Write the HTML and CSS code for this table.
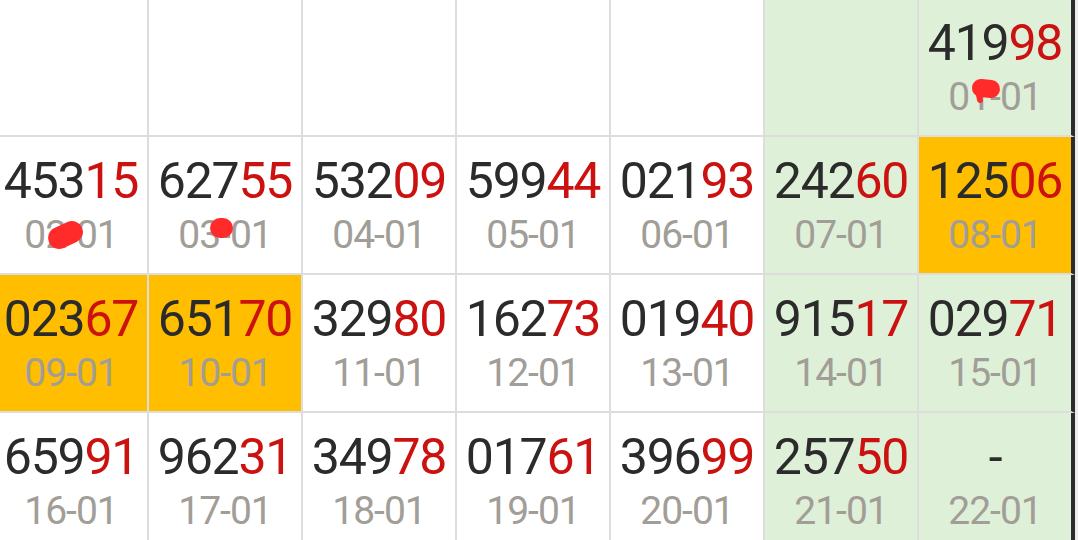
FILE: index.html
```html
<!DOCTYPE html>
<html>
<head>
<meta charset="utf-8">
<link rel="stylesheet" href="styles.css">
</head>
<body>
<div class="page">
  <div class="grid">
    <div class="cell"></div>
    <div class="cell"></div>
    <div class="cell"></div>
    <div class="cell"></div>
    <div class="cell"></div>
    <div class="cell green"></div>
    <div class="cell green last">
      <div class="num">419<span class="hi">98</span></div>
      <div class="date">01-01</div>
      <svg class="mark m3" width="44" height="40" viewBox="0 0 44 40"><path d="M21 18 L31 19" stroke="#ff2a2a" stroke-width="18" stroke-linecap="round" fill="none"/><path d="M19 25 L20 30" stroke="#ff2a2a" stroke-width="6" stroke-linecap="round" fill="none"/></svg>
    </div>

    <div class="cell">
      <div class="num">453<span class="hi">15</span></div>
      <div class="date">02-01</div>
      <svg class="mark m1" width="50" height="45" viewBox="0 0 50 45"><path d="M19 28 L32 22" stroke="#ff2a2a" stroke-width="22" stroke-linecap="round" fill="none"/></svg>
    </div>
    <div class="cell">
      <div class="num">627<span class="hi">55</span></div>
      <div class="date">03-01</div>
      <svg class="mark m2" width="44" height="40" viewBox="0 0 44 40"><path d="M20 18 L23 18" stroke="#ff2a2a" stroke-width="20" stroke-linecap="round" fill="none"/></svg>
    </div>
    <div class="cell">
      <div class="num">532<span class="hi">09</span></div>
      <div class="date">04-01</div>
    </div>
    <div class="cell">
      <div class="num">599<span class="hi">44</span></div>
      <div class="date">05-01</div>
    </div>
    <div class="cell">
      <div class="num">021<span class="hi">93</span></div>
      <div class="date">06-01</div>
    </div>
    <div class="cell green">
      <div class="num">242<span class="hi">60</span></div>
      <div class="date">07-01</div>
    </div>
    <div class="cell orange last">
      <div class="num">125<span class="hi">06</span></div>
      <div class="date">08-01</div>
    </div>

    <div class="cell orange">
      <div class="num">023<span class="hi">67</span></div>
      <div class="date">09-01</div>
    </div>
    <div class="cell orange">
      <div class="num">651<span class="hi">70</span></div>
      <div class="date">10-01</div>
    </div>
    <div class="cell">
      <div class="num">329<span class="hi">80</span></div>
      <div class="date">11-01</div>
    </div>
    <div class="cell">
      <div class="num">162<span class="hi">73</span></div>
      <div class="date">12-01</div>
    </div>
    <div class="cell">
      <div class="num">019<span class="hi">40</span></div>
      <div class="date">13-01</div>
    </div>
    <div class="cell green">
      <div class="num">915<span class="hi">17</span></div>
      <div class="date">14-01</div>
    </div>
    <div class="cell green last">
      <div class="num">029<span class="hi">71</span></div>
      <div class="date">15-01</div>
    </div>

    <div class="cell">
      <div class="num">659<span class="hi">91</span></div>
      <div class="date">16-01</div>
    </div>
    <div class="cell">
      <div class="num">962<span class="hi">31</span></div>
      <div class="date">17-01</div>
    </div>
    <div class="cell">
      <div class="num">349<span class="hi">78</span></div>
      <div class="date">18-01</div>
    </div>
    <div class="cell">
      <div class="num">017<span class="hi">61</span></div>
      <div class="date">19-01</div>
    </div>
    <div class="cell">
      <div class="num">396<span class="hi">99</span></div>
      <div class="date">20-01</div>
    </div>
    <div class="cell green">
      <div class="num">257<span class="hi">50</span></div>
      <div class="date">21-01</div>
    </div>
    <div class="cell green last">
      <div class="num">-</div>
      <div class="date">22-01</div>
    </div>
  </div>
</div>
</body>
</html>
```

FILE: styles.css
```css
html, body {
  margin: 0;
  padding: 0;
}
body {
  background: #ececec;
  width: 1078px;
  height: 540px;
  overflow: hidden;
  font-family: Roboto, "Liberation Sans", sans-serif;
}
.page {
  margin-left: -5px;
  margin-top: -1px;
}
.grid {
  display: grid;
  grid-template-columns: repeat(6, 154px) 156px;
  grid-auto-rows: 138px;
}
.cell {
  position: relative;
  background: #ffffff;
  border-right: 2px solid #dddddd;
  border-bottom: 2px solid #dddddd;
  padding-top: 19px;
  text-align: center;
  box-sizing: border-box;
}
.cell.last {
  border-right: 4px solid #2c2c2c;
}
.cell.green {
  background: #dff0d8;
}
.cell.orange {
  background: #ffbe00;
}
.num {
  font-size: 50px;
  line-height: 50px;
  letter-spacing: -1.2px;
  color: #2b2b2b;
  white-space: nowrap;
}
.hi {
  color: #cc1111;
}
.date {
  font-size: 39px;
  line-height: 58px;
  letter-spacing: -1px;
  color: #a19d97;
  white-space: nowrap;
}
.mark {
  position: absolute;
  display: block;
}
.m1 {
  left: 45px;
  top: 73px;
}
.m2 {
  left: 51px;
  top: 73px;
}
.m3 {
  left: 41px;
  top: 71px;
}
```
